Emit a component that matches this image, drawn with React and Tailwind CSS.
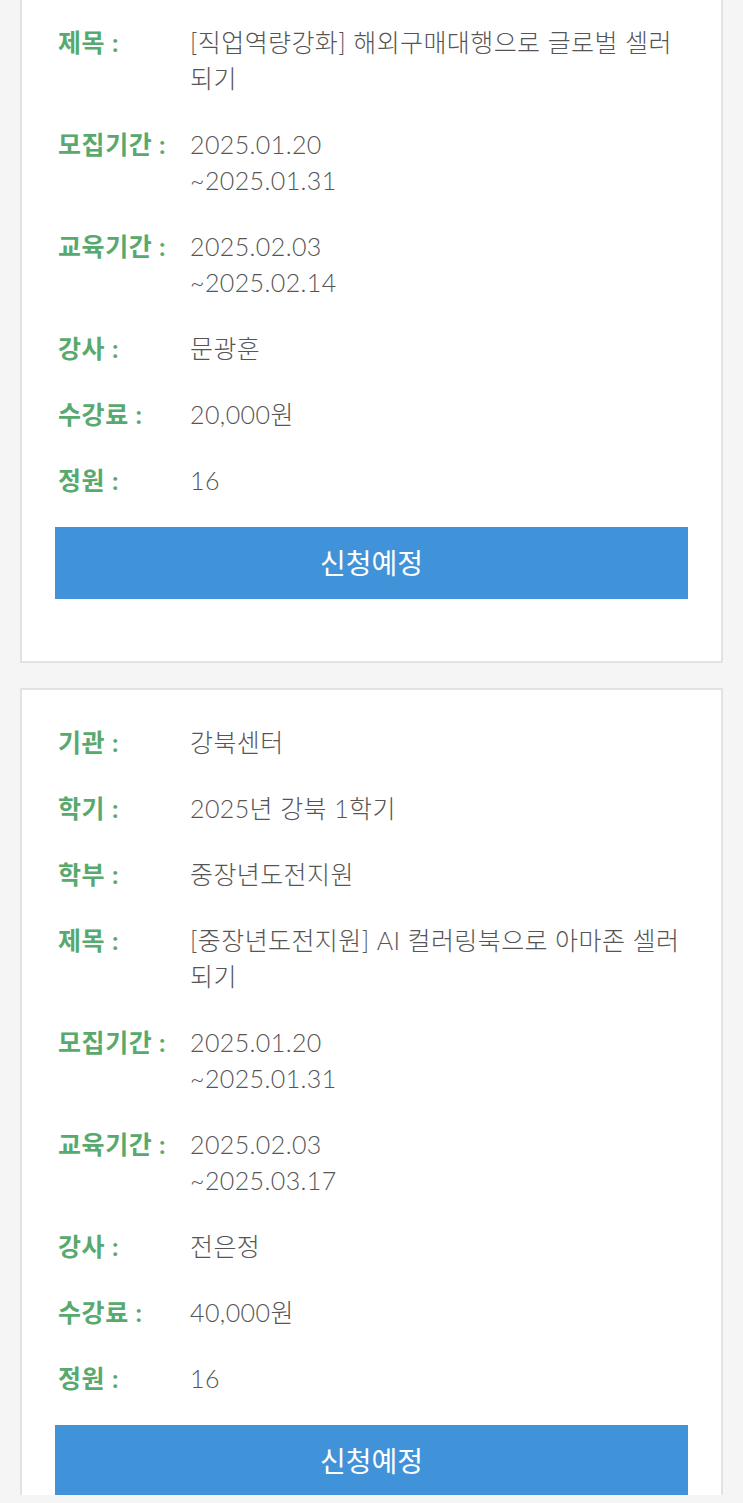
import React from "react";

const cards = [
  {
    rows: [
      { label: "제목", value: ["[직업역량강화] 해외구매대행으로 글로벌 셀러 되기"] },
      { label: "모집기간", value: ["2025.01.20", "~2025.01.31"] },
      { label: "교육기간", value: ["2025.02.03", "~2025.02.14"] },
      { label: "강사", value: ["문광훈"] },
      { label: "수강료", value: ["20,000원"] },
      { label: "정원", value: ["16"] },
    ],
  },
  {
    rows: [
      { label: "기관", value: ["강북센터"] },
      { label: "학기", value: ["2025년 강북 1학기"] },
      { label: "학부", value: ["중장년도전지원"] },
      { label: "제목", value: ["[중장년도전지원] AI 컬러링북으로 아마존 셀러 되기"] },
      { label: "모집기간", value: ["2025.01.20", "~2025.01.31"] },
      { label: "교육기간", value: ["2025.02.03", "~2025.03.17"] },
      { label: "강사", value: ["전은정"] },
      { label: "수강료", value: ["40,000원"] },
      { label: "정원", value: ["16"] },
    ],
  },
];

function Row({ label, value }) {
  return (
    <div className="flex mb-[30px] leading-[36px]">
      <div className="w-[135px] shrink-0 pl-[3px] text-[25px] font-bold tracking-[0.6px] text-[#58a96d]">
        {label} :
      </div>
      <div className="flex-1 text-[25px] font-light tracking-[0.4px] text-[#555]">
        {value.map((line, i) => (
          <div key={i}>{line}</div>
        ))}
      </div>
    </div>
  );
}

function ApplyButton() {
  return (
    <button className="w-full h-[72px] bg-[#4193d9] text-white text-[28px] mt-[-1px]">
      신청예정
    </button>
  );
}

export default function App() {
  return (
    <div
      className="bg-[#f5f5f5] h-[1503px] overflow-hidden"
      style={{ fontFamily: "Lato, 'Noto Sans CJK KR', sans-serif" }}
    >
      <div className="h-[1495px] overflow-hidden px-[20px]">
        {/* top card, scrolled partly off screen */}
        <div className="bg-white border-2 border-t-0 border-[#e2e2e2] px-[33px] pt-[24px] pb-[62px]">
          {cards[0].rows.map((r) => (
            <Row key={r.label} {...r} />
          ))}
          <ApplyButton />
        </div>

        <div className="bg-white border-2 border-[#e2e2e2] px-[33px] pt-[34px] pb-[62px] mt-[25px]">
          {cards[1].rows.map((r) => (
            <Row key={r.label} {...r} />
          ))}
          <ApplyButton />
        </div>
      </div>
    </div>
  );
}
